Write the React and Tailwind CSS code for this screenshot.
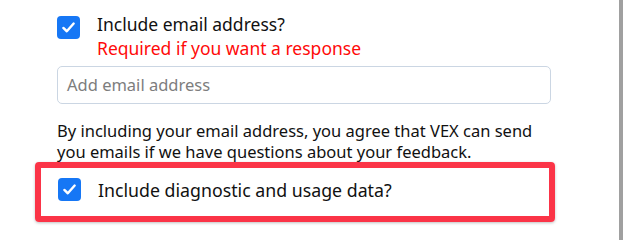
import React from "react";

function Check() {
  return (
    <div className="w-[23px] h-[23px] rounded-[4px] bg-[#1677f5] flex items-center justify-center shrink-0">
      <svg width="15" height="15" viewBox="0 0 16 16" fill="none">
        <path d="M2.5 8.5 L6.2 12 L13.5 3.8" stroke="white" strokeWidth="2.6" strokeLinecap="round" strokeLinejoin="round" />
      </svg>
    </div>
  );
}

export default function App() {
  return (
    <div className="w-[623px] h-[240px] bg-white flex overflow-hidden" style={{ fontFamily: '"Noto Sans", sans-serif' }}>
      <div className="flex-1 pl-[35px] pt-[16px]">
        <div className="pl-[22px] flex items-start gap-[17px]">
          <Check />
          <div className="-mt-[3px]">
            <div className="text-[17.5px] leading-[23px] text-[#111]">Include email address?</div>
            <div className="text-[17.5px] leading-[24px] text-[#ff0a0a]">Required if you want a response</div>
          </div>
        </div>
        <div className="pl-[22px] mt-[6px]">
          <div className="w-[494px] h-[38px] border border-[#cbd6e3] rounded-[5px] flex items-center pl-[9px] text-[16.5px] text-[#7d7d7d]">
            Add email address
          </div>
        </div>
        <div className="pl-[22px] mt-[16px] text-[16.5px] leading-[21px] text-[#111] w-[520px]">
          By including your email address, you agree that VEX can send you emails if we have questions about your feedback.
        </div>
        <div className="w-[520px] h-[60px] border-[6px] border-[#fb3447] rounded-[4px] shadow-[0_1px_3px_rgba(0,0,0,0.25)] flex items-start pt-[10px] pl-[17px] gap-[17px]">
          <Check />
          <div className="text-[17.75px] leading-[24px] text-[#111]">Include diagnostic and usage data?</div>
        </div>
      </div>
      <div className="w-[4px] h-full bg-[#a0a0a0]" />
    </div>
  );
}
